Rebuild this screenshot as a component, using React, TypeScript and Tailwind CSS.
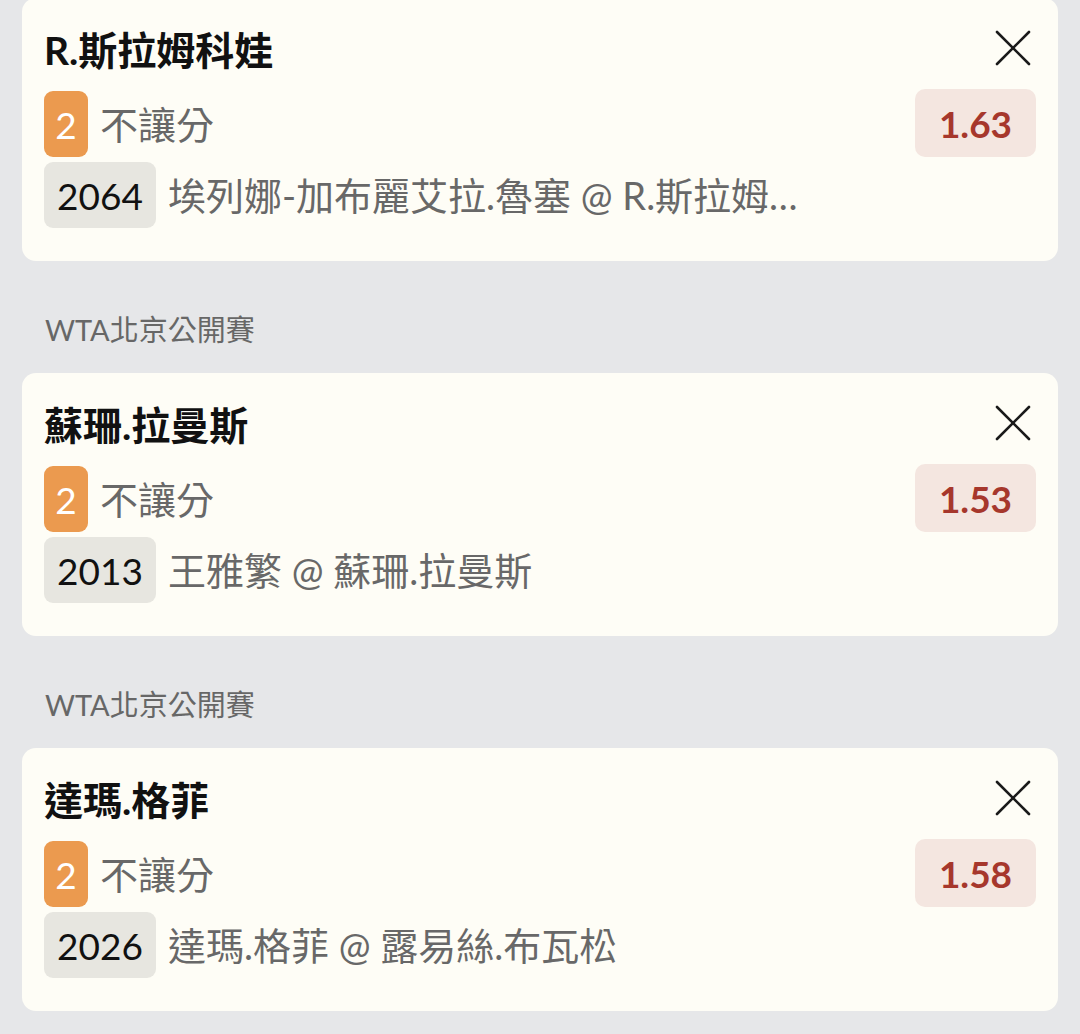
import React from "react";

type Bet = {
  title: string;
  odds: string;
  code: string;
  match: string;
  label?: string;
};

const bets: Bet[] = [
  { title: "R.斯拉姆科娃", odds: "1.63", code: "2064", match: "埃列娜-加布麗艾拉.魯塞 @ R.斯拉姆科娃" },
  { label: "WTA北京公開賽", title: "蘇珊.拉曼斯", odds: "1.53", code: "2013", match: "王雅繁 @ 蘇珊.拉曼斯" },
  { label: "WTA北京公開賽", title: "達瑪.格菲", odds: "1.58", code: "2026", match: "達瑪.格菲 @ 露易絲.布瓦松" },
];

function CloseIcon() {
  return (
    <svg width="36" height="36" viewBox="0 0 36 36" className="mr-[5px] mb-[4px] shrink-0">
      <line x1="2" y1="2" x2="34" y2="34" stroke="#1a1a1a" strokeWidth="2.6" strokeLinecap="round" />
      <line x1="34" y1="2" x2="2" y2="34" stroke="#1a1a1a" strokeWidth="2.6" strokeLinecap="round" />
    </svg>
  );
}

function Card({ bet }: { bet: Bet }) {
  return (
    <div className="rounded-[14px] bg-[#fefdf6] pt-[26px] pb-[33px] px-[22px]">
      <div className="flex h-[52px] items-center justify-between">
        <div className="text-[39px] font-bold leading-none text-[#111111]">{bet.title}</div>
        <CloseIcon />
      </div>
      <div className="mt-[13px] flex items-start">
        <div className="flex min-w-0 flex-1 flex-col gap-[5px] pr-[95px]">
          <div className="mt-[2px] flex h-[66px] items-center gap-[12px]">
            <div className="flex h-[66px] w-[44px] shrink-0 items-center justify-center rounded-[9px] bg-[#eb9a4f] text-[37px] leading-none text-white">
              2
            </div>
            <div className="text-[38px] leading-none text-[#686868]">不讓分</div>
          </div>
          <div className="flex h-[66px] items-center gap-[12px]">
            <div className="flex h-[66px] w-[112px] shrink-0 items-center justify-center rounded-[9px] bg-[#e7e6e0] text-[37px] leading-none text-[#111111]">
              {bet.code}
            </div>
            <div className="min-w-0 flex-1 truncate text-[38px] leading-[66px] text-[#686868]">
              {bet.match}
            </div>
          </div>
        </div>
        <div className="flex h-[68px] w-[121px] shrink-0 items-center justify-center rounded-[10px] bg-[#f4e6e0] text-[37px] font-bold leading-none text-[#a6372c]">
          {bet.odds}
        </div>
      </div>
    </div>
  );
}

export default function App() {
  return (
    <div
      className="min-h-[1034px] w-[1080px] overflow-hidden bg-[#e6e7e9] px-[22px]"
      style={{ fontFamily: 'Lato, "Noto Sans CJK TC", "Noto Sans CJK SC", sans-serif' }}
    >
      <div className="-mt-[2px] flex flex-col">
        {bets.map((bet, i) => (
          <div key={i} className="flex flex-col">
            {bet.label && (
              <div className="pt-[49px] pb-[23px] pl-[23px] text-[29px] leading-[40px] text-[#676767]">
                {bet.label}
              </div>
            )}
            <Card bet={bet} />
          </div>
        ))}
      </div>
    </div>
  );
}
